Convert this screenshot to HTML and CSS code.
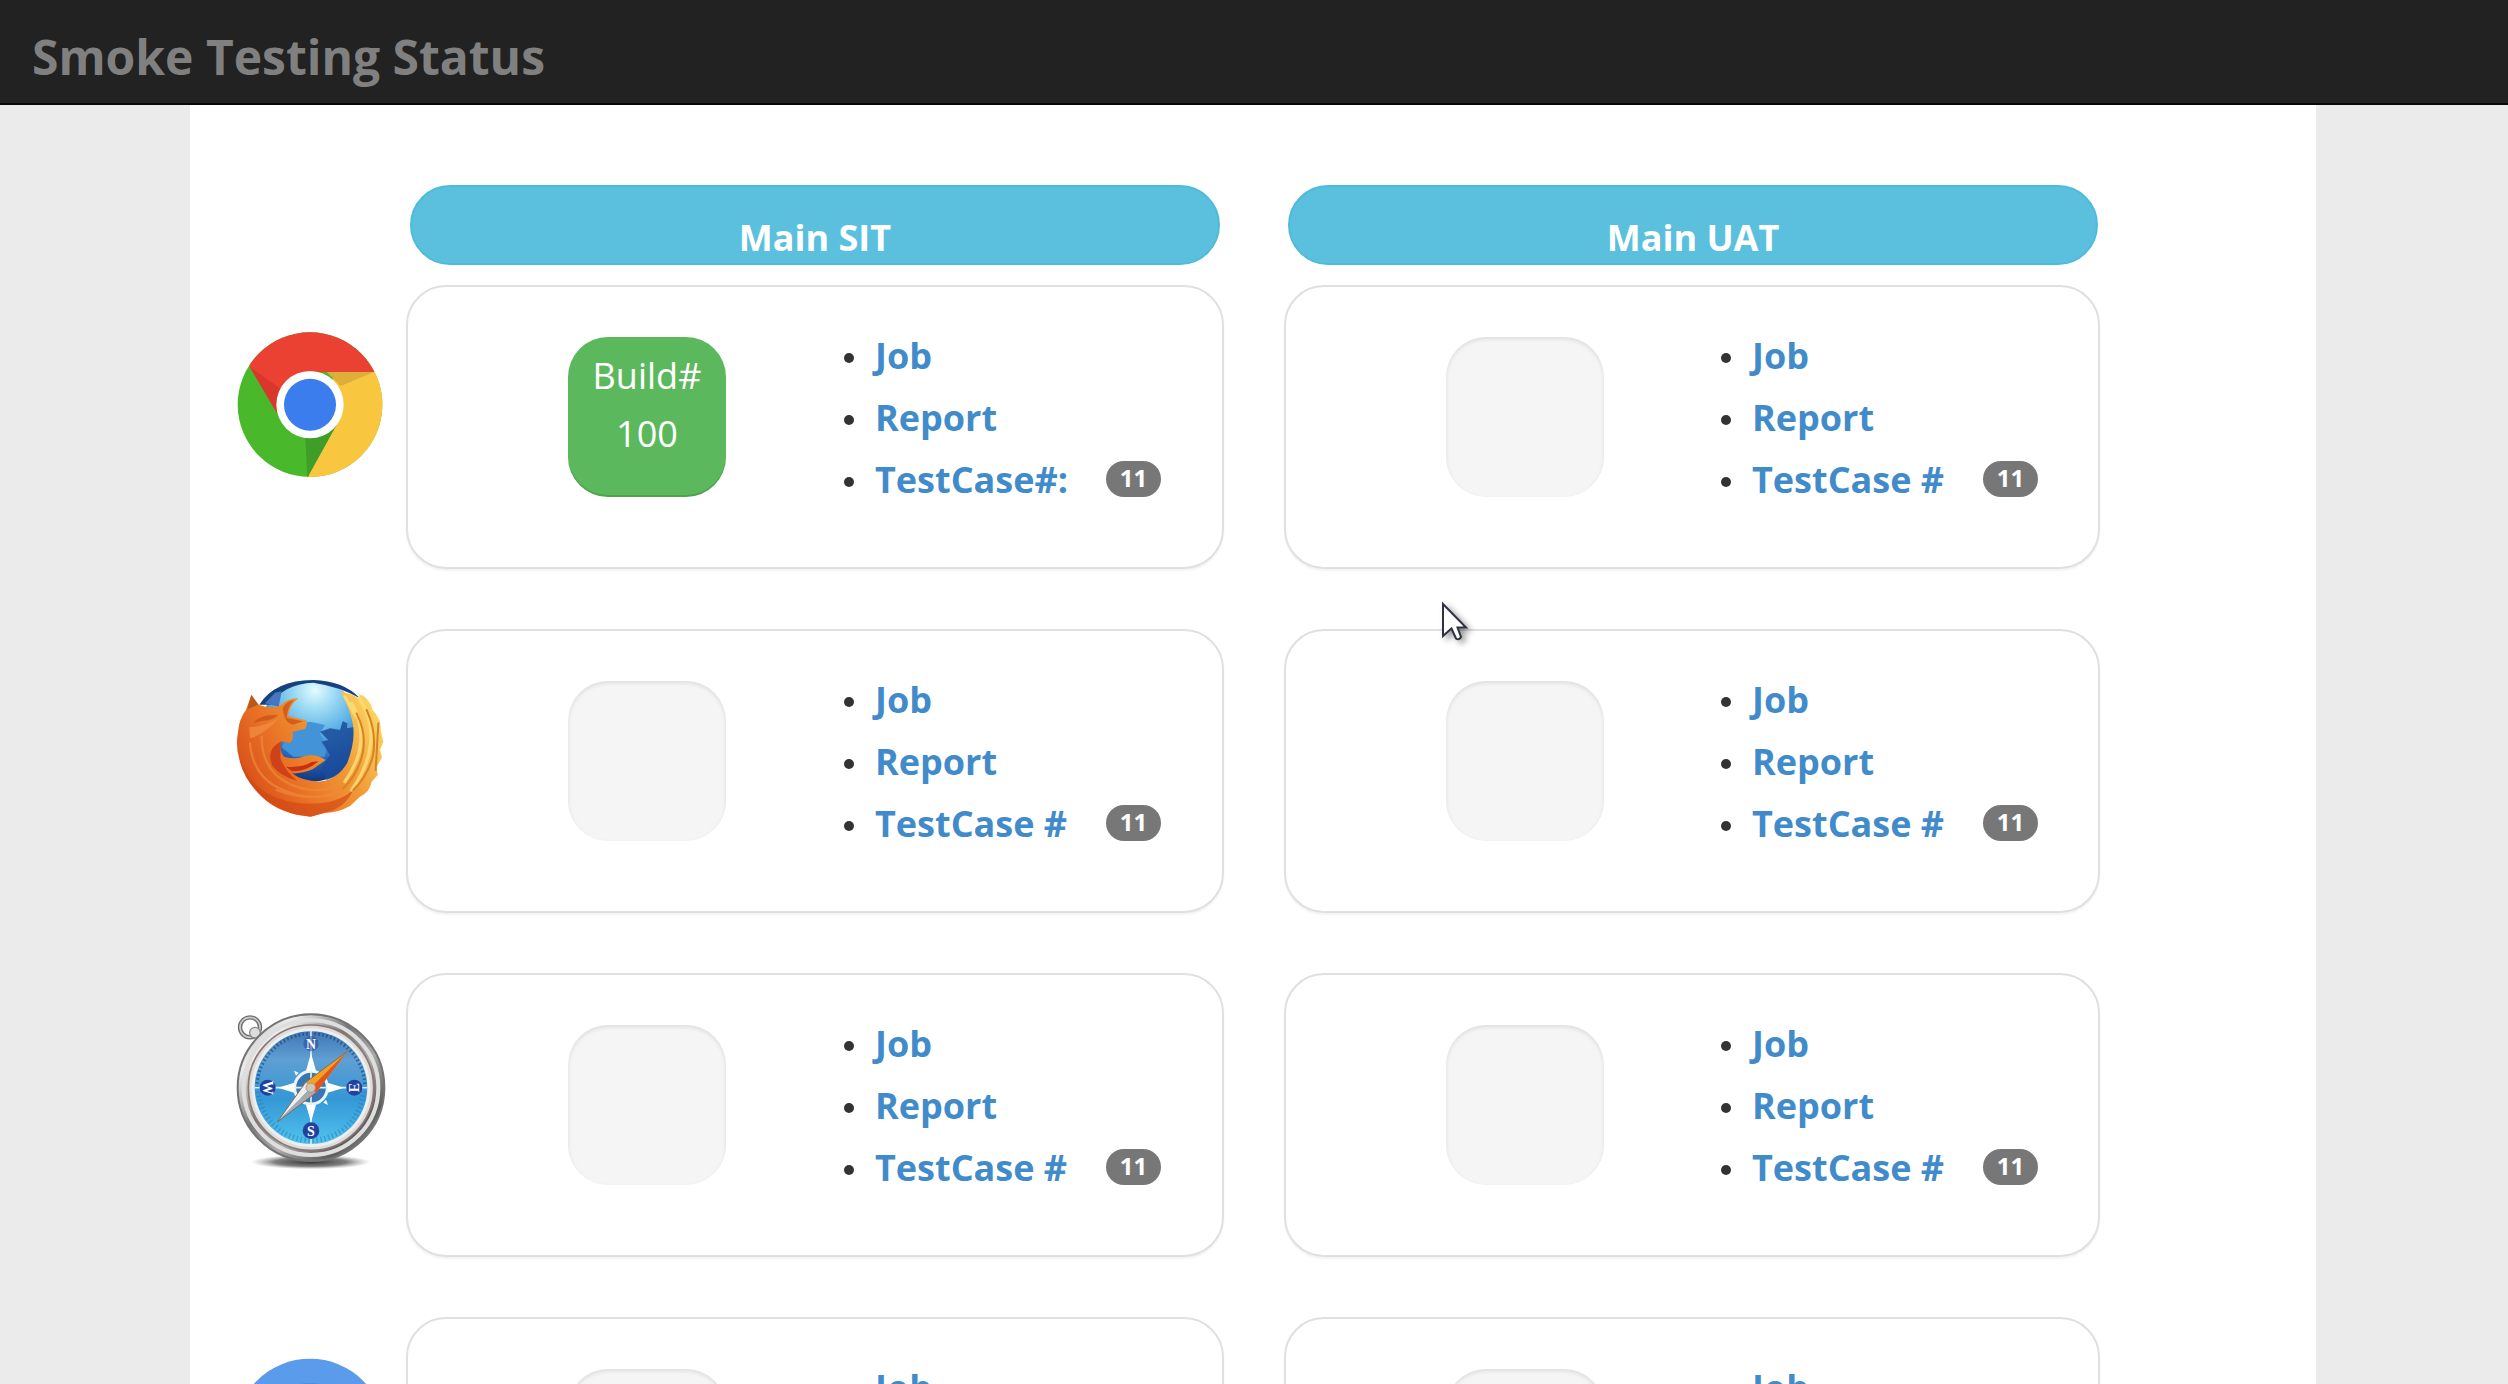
FILE: index.html
```
<!DOCTYPE html>
<html lang="en">
<head>
<meta charset="utf-8">
<title>Smoke Testing Status</title>
<link rel="stylesheet" href="styles.css">
</head>
<body>
<header class="navbar"><span class="brand">Smoke Testing Status</span></header>
<main class="container">
  <div class="row heads">
    <h2 class="pill">Main SIT</h2>
    <h2 class="pill">Main UAT</h2>
  </div>

  <section class="row">
    <svg class="browser" viewBox="60 -75 480 852" aria-label="Chrome">
      <defs><clipPath id="disc"><circle cx="300" cy="284" r="217"/></clipPath></defs>
      <g clip-path="url(#disc)">
        <rect x="80" y="60" width="440" height="450" fill="#49b82a"/>
        <path d="M300 283 390 184H530V510H290L296 498Z" fill="#f8c63f"/>
        <path d="M300 283 386 335 292 504 286 384Z" fill="#3f9e27"/>
        <path d="M380 345 296 498 292 520H540V184H380Z" fill="#f8c63f"/>
        <path d="M120 172 80 40H520L492 186H300L201 310Z" fill="#eb4132"/>
        <path d="M120 172 218 240 199 306Z" fill="#d9372b"/>
        <path d="M350 186H492L392 228Z" fill="#deae3a"/>
      </g>
      <circle cx="300" cy="284" r="101" fill="#fff"/>
      <circle cx="300" cy="284" r="78" fill="#3b7ded"/>
    </svg>
    <article class="card">
      <div class="status status-ok">Build#<br>100</div>
      <ul class="links"><li><a>Job</a></li><li><a>Report</a></li><li><a>TestCase#:</a><span class="badge">11</span></li></ul>
    </article>
    <article class="card">
      <div class="status"></div>
      <ul class="links"><li><a>Job</a></li><li><a>Report</a></li><li><a>TestCase #</a><span class="badge">11</span></li></ul>
    </article>
  </section>

  <section class="row">
    <svg class="browser" viewBox="60 -93 480 852" aria-label="Firefox">
      <defs>
        <radialGradient id="globe" gradientUnits="userSpaceOnUse" cx="315" cy="90" r="290">
          <stop offset="0" stop-color="#e4fbff"/><stop offset=".2" stop-color="#9fdcf4"/><stop offset=".45" stop-color="#5cb1e6"/><stop offset=".75" stop-color="#2360ae"/><stop offset="1" stop-color="#0d2c74"/>
        </radialGradient>
        <linearGradient id="fur" gradientUnits="userSpaceOnUse" x1="100" y1="400" x2="510" y2="170">
          <stop offset="0" stop-color="#d64a17"/><stop offset=".35" stop-color="#ea7426"/><stop offset=".65" stop-color="#f09a35"/><stop offset="1" stop-color="#fbd662"/>
        </linearGradient>
      </defs>
      <circle cx="303" cy="212" r="153" fill="url(#globe)"/>
      <path d="M148 134Q195 60 310 60 400 62 450 115 390 80 310 68 225 70 180 134Z" fill="#17407f"/>
      <path d="M165 130 195 98 215 94 206 140Z" fill="#4676bd"/>
      <path d="M250 195 300 185 345 195 330 220 350 260 345 290 250 290 215 262Z" fill="#4393d8"/>
      <path d="M330 215 360 205 390 210 398 184 412 190 411 205 436 200 430 290 405 340 350 360 335 320 360 285 335 245 355 240Z" fill="#1b4c9b" opacity=".85"/>
      <path d="M108 150 124 104 146 134Q185 148 213 136 228 116 265 114 238 136 234 168L288 181Q294 192 286 206L248 216Q252 238 240 249L214 244Q205 268 222 290 258 300 284 288 320 280 347 300 330 312 308 328 275 342 246 340 280 366 335 364 385 355 412 308 438 240 428 190 420 145 392 95 436 102 450 120L448 102Q480 115 488 150 515 178 512 210L520 245 510 270 516 292 500 320 503 345 485 365Q480 395 450 410L420 438Q380 460 345 458L302 470 260 464Q190 450 145 400 98 350 88 298 76 260 84 215 88 175 108 150Z" fill="url(#fur)"/>
      <path d="M88 290Q110 360 170 400 240 438 330 430 390 425 430 390 405 445 345 458L302 470 260 464Q120 425 88 290Z" fill="#cf4313" opacity=".6"/>
      <path d="M213 244Q165 270 188 318 215 352 262 362 225 334 211 294Z" fill="#c93b16" opacity=".85"/>
      <path d="M228 320Q275 324 305 306L325 304Q292 334 246 334Z" fill="#c92f14"/>
      <path d="M130 190Q145 164 205 164 190 180 160 182 145 184 130 190ZM218 145Q228 124 252 120 232 140 230 174L280 184 248 194Q224 190 218 145Z" fill="#c95019" opacity=".75"/>
      <path d="M124 106 145 134 112 148Z" fill="#b9581f"/>
      <g fill="none" stroke-linecap="round">
        <path d="M120 250Q130 355 220 390 310 430 390 390M155 230Q155 330 235 370 310 405 375 380M200 390Q300 430 400 395" stroke="#f0893a" stroke-width="7" opacity=".7"/>
        <path d="M425 130Q455 180 453 240 450 300 405 365M448 115Q490 180 482 250 475 320 425 390M405 110 438 170" stroke="#fbdc76" stroke-width="10" opacity=".85"/>
        <path d="M440 160Q470 220 458 280 445 340 400 385M470 150Q502 220 488 290 472 350 430 390M505 190 497 330" stroke="#d98125" stroke-width="6"/>
      </g>
      <path d="M118 200Q150 205 205 175 170 220 120 235Z" fill="#f08b42" opacity=".8"/>
    </svg>
    <article class="card">
      <div class="status"></div>
      <ul class="links"><li><a>Job</a></li><li><a>Report</a></li><li><a>TestCase #</a><span class="badge">11</span></li></ul>
    </article>
    <article class="card">
      <div class="status"></div>
      <ul class="links"><li><a>Job</a></li><li><a>Report</a></li><li><a>TestCase #</a><span class="badge">11</span></li></ul>
    </article>
  </section>

  <section class="row">
    <svg class="browser" viewBox="60 -51 480 852" aria-label="Safari">
      <defs>
        <radialGradient id="shade"><stop offset="0" stop-color="#333"/><stop offset=".6" stop-color="#555" stop-opacity=".75"/><stop offset="1" stop-color="#999" stop-opacity="0"/></radialGradient>
        <linearGradient id="metal" x1="0" y1="0" x2="1" y2="1"><stop offset="0" stop-color="#999"/><stop offset=".2" stop-color="#eee"/><stop offset=".42" stop-color="#777"/><stop offset=".6" stop-color="#aaa"/><stop offset=".8" stop-color="#5c5c5c"/><stop offset="1" stop-color="#aaa"/></linearGradient>
        <linearGradient id="dial" x1="0" y1="0" x2="0" y2="1"><stop offset="0" stop-color="#3f76b4"/><stop offset=".25" stop-color="#5f9fd3"/><stop offset=".6" stop-color="#3497d5"/><stop offset="1" stop-color="#50c4ee"/></linearGradient>
      </defs>
      <ellipse cx="302" cy="516" rx="180" ry="22" fill="url(#shade)"/>
      <circle cx="120" cy="112" r="30" fill="none" stroke="#6c6c6c" stroke-width="13"/>
      <circle cx="120" cy="112" r="30" fill="none" stroke="#ccc" stroke-width="5"/>
      <circle cx="135" cy="128" r="16" fill="#ddd" stroke="#888" stroke-width="4"/>
      <circle cx="303" cy="293" r="220" fill="url(#metal)" stroke="#737373" stroke-width="6"/>
      <circle cx="303" cy="293" r="202" fill="none" stroke="#dedede" stroke-width="12"/>
      <circle cx="303" cy="293" r="188" fill="#ddd" stroke="#8c7770" stroke-width="5"/>
      <circle cx="303" cy="293" r="178" fill="#eee"/>
      <circle cx="303" cy="293" r="169" fill="url(#dial)"/>
      <path d="M141 293A162 162 0 0 1 465 293" fill="none" stroke="#183e70" stroke-width="10" stroke-dasharray="5 7" opacity=".6"/>
      <path d="M145 293A158 158 0 0 0 461 293" fill="none" stroke="#2379b4" stroke-width="16" stroke-dasharray="4 8" opacity=".5"/>
      <circle cx="303" cy="293" r="49" fill="#3977b2" stroke="#e8f6fc" stroke-width="9"/>
      <path d="M303 122v340M134 293h338" stroke="#dceefa" stroke-width="5"/>
      <path d="M303 190 318 242H288ZM303 396 318 345H288ZM204 293 253 278V308ZM402 293 353 278V308ZM252 242 266 248 258 257ZM354 345 340 338 348 329Z" fill="#fff"/>
      <g fill="#2342a0"><circle cx="303" cy="422" r="25"/><circle cx="173" cy="293" r="24"/><circle cx="433" cy="293" r="24"/><circle cx="303" cy="161" r="23" opacity=".5"/></g>
      <g class="compass"><text x="303" y="177">N</text><text x="303" y="437">S</text><text transform="translate(159 293) rotate(90)" x="0" y="0">W</text><text transform="translate(447 293) rotate(-90)" x="0" y="0">E</text></g>
      <path d="M412 184 318 308 287 277Z" fill="#f5a01e"/>
      <path d="M412 184 318 308 303 293Z" fill="#e4541f"/>
      <path d="M202 396 287 277 303 293Z" fill="#eee"/>
      <path d="M202 396 318 308 303 293Z" fill="#aaa"/>
      <path d="M202 396 287 277 412 184M202 396 318 308" fill="none" stroke="#7c6d5c" stroke-width="3"/>
      <circle cx="302" cy="293" r="14" fill="#d4c4ae" stroke="#999" stroke-width="3"/>
    </svg>
    <article class="card">
      <div class="status"></div>
      <ul class="links"><li><a>Job</a></li><li><a>Report</a></li><li><a>TestCase #</a><span class="badge">11</span></li></ul>
    </article>
    <article class="card">
      <div class="status"></div>
      <ul class="links"><li><a>Job</a></li><li><a>Report</a></li><li><a>TestCase #</a><span class="badge">11</span></li></ul>
    </article>
  </section>

  <section class="row">
    <svg class="browser" viewBox="60 51 480 852" aria-label="Chromium">
      <circle cx="300" cy="401" r="225" fill="#5b9bec"/>
      <circle cx="300" cy="401" r="152" fill="#4f8de0"/>
    </svg>
    <article class="card">
      <div class="status"></div>
      <ul class="links"><li><a>Job</a></li><li><a>Report</a></li><li><a>TestCase #</a><span class="badge">11</span></li></ul>
    </article>
    <article class="card">
      <div class="status"></div>
      <ul class="links"><li><a>Job</a></li><li><a>Report</a></li><li><a>TestCase #</a><span class="badge">11</span></li></ul>
    </article>
  </section>
</main>
<svg class="cursor" viewBox="0 0 30 44"><path d="M2 2V34L10.500 26.500 15 36.500Q18 38.500 20 35L16.500 25.500H25Z" fill="#fff" stroke="#2e3144" stroke-width="2"/></svg>
</body>
</html>
```
FILE: styles.css
```
* { box-sizing: border-box; }
body {
  margin: 0;
  height: 1384px;
  overflow: hidden;
  background: #ebebeb;
  color: #333;
  font: 36px/1.6 "Open Sans", sans-serif;
}
.navbar {
  height: 105px;
  padding: 16px 32px 0;
  background: #222;
  border-bottom: 2px solid #080808;
}
.brand {
  display: block;
  color: #808080;
  font-size: 48px;
  font-weight: 700;
  line-height: 82px;
}
.container {
  width: 2126px;
  height: 1279px;
  margin-left: 190px;
  padding: 80px 0 0 40px;
  overflow: hidden;
  background: #fff;
}
.row {
  display: grid;
  grid-template-columns: 116px 818px 816px;
  column-gap: 60px;
  height: 284px;
  margin-bottom: 60px;
}
.heads {
  grid-template-columns: 810px 810px;
  column-gap: 68px;
  height: 80px;
  margin: 0 0 20px 180px;
}
.pill {
  height: 80px;
  margin: 0;
  padding-top: 22px;
  border: 2px solid #4fbbdb;
  border-radius: 40px;
  background: #5bc0de;
  color: #fff;
  font-size: 36px;
  line-height: 57px;
  font-weight: 700;
  text-align: center;
}
.browser { width: 160px; height: 284px; }
.card {
  display: flex;
  padding: 50px 0 0 160px;
  border: 2px solid #e0e0e0;
  border-radius: 40px;
  background: #fff;
  box-shadow: 0 2px 2px rgba(0, 0, 0, .05);
}
.status {
  flex: none;
  width: 158px;
  height: 160px;
  padding-top: 10px;
  border-radius: 40px;
  background: #f5f5f5;
  box-shadow: inset 0 2px 4px rgba(0, 0, 0, .1);
  text-align: center;
}
.status-ok {
  background: #5cb85c;
  box-shadow: inset 0 -2px 0 rgba(0, 0, 0, .12);
  color: #fff;
}
.links {
  margin: -12px 0 0 117px;
  padding: 0;
  list-style: none;
}
.card:nth-child(2) .links { margin-left: 118px; }
.links li {
  display: flex;
  align-items: center;
  height: 62px;
  line-height: 62px;
  white-space: nowrap;
}
.links li::before {
  content: "";
  width: 10px;
  height: 10px;
  margin: 4px 21px 0 0;
  border-radius: 50%;
  background: #333;
}
.links a { width: 231px; color: #428bca; font-weight: 700; }
.badge {
  width: 55px;
  height: 36px;
  margin-bottom: 2px;
  border-radius: 20px;
  background: #777;
  color: #fff;
  font-size: 24px;
  font-weight: 700;
  line-height: 34px;
  text-align: center;
}
.compass text {
  fill: #fff;
  font: 700 42px "Liberation Serif", serif;
  text-anchor: middle;
}
.cursor {
  position: absolute;
  left: 1441px;
  top: 602px;
  width: 30px;
  height: 44px;
  overflow: visible;
  filter: drop-shadow(4px 3px 3px rgba(0, 0, 0, .4));
}
```
